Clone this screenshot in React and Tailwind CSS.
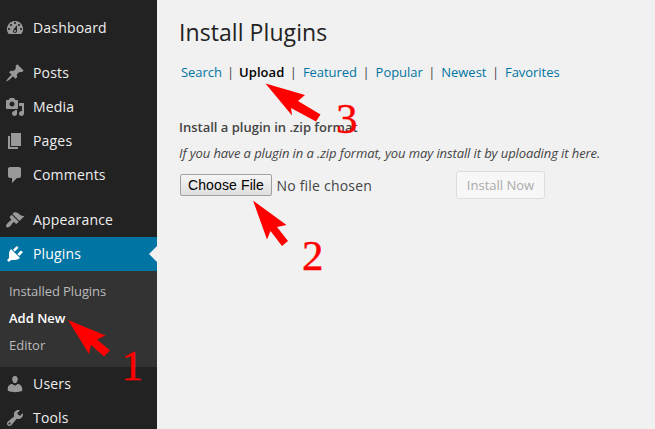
import React from "react";

const ICONS = {
  dashboard:
    "M3.76 16h12.48A7.998 7.998 0 0 0 10 3a7.998 7.998 0 0 0-6.24 13zM10 4c.55 0 1 .45 1 1s-.45 1-1 1-1-.45-1-1 .45-1 1-1zM6 6c.55 0 1 .45 1 1s-.45 1-1 1-1-.45-1-1 .45-1 1-1zm8 0c.55 0 1 .45 1 1s-.45 1-1 1-1-.45-1-1 .45-1 1-1zm-5.37 5.55L12 7v6c0 1.1-.9 2-2 2s-2-.9-2-2c0-.57.24-1.08.63-1.45zM4 10c.55 0 1 .45 1 1s-.45 1-1 1-1-.45-1-1 .45-1 1-1zm12 0c.55 0 1 .45 1 1s-.45 1-1 1-1-.45-1-1 .45-1 1-1zm-5 3c0-.55-.45-1-1-1s-1 .45-1 1 .45 1 1 1 1-.45 1-1z",
  posts:
    "M10.44 3.02l1.82-1.82 6.36 6.35-1.83 1.82c-1.05-.68-2.48-.57-3.41.36l-.75.75c-.92.93-1.04 2.35-.35 3.41l-1.83 1.82-2.41-2.41-2.8 2.79c-.42.42-3.38 2.71-3.8 2.29s1.86-3.39 2.28-3.81l2.79-2.79L4.1 9.36l1.83-1.82c1.05.69 2.48.57 3.4-.36l.75-.75c.93-.92 1.05-2.35.36-3.41z",
  media:
    "M13 11V4c0-.55-.45-1-1-1h-1.67L9 1H5L3.67 3H2c-.55 0-1 .45-1 1v7c0 .55.45 1 1 1h10c.55 0 1-.45 1-1zM7 4.5c1.38 0 2.5 1.12 2.5 2.5S8.38 9.5 7 9.5 4.5 8.38 4.5 7 5.62 4.5 7 4.5zM14 6h5v10.5c0 1.38-1.12 2.5-2.5 2.5S14 17.88 14 16.5s1.12-2.5 2.5-2.5c.17 0 .34.02.5.05V9h-3V6zm-4 8.05V13h2v3.5c0 1.38-1.12 2.5-2.5 2.5S7 17.88 7 16.5 8.12 14 9.5 14c.17 0 .34.02.5.05z",
  pages: "M6 15V2h10v13H6zm-1 1h8v2H3V5h2v11z",
  comments:
    "M5 2h9c1.1 0 2 .9 2 2v7c0 1.1-.9 2-2 2h-2l-5 5v-5H5c-1.1 0-2-.9-2-2V4c0-1.1.9-2 2-2z",
  appearance:
    "M14.48 11.06L7.41 3.99l1.5-1.5c.5-.56 2.3-.47 3.51.32 1.21.8 1.43 1.28 2.91 2.1 1.18.64 2.45 1.26 4.45.85zm-.71.71L6.7 4.7 4.93 6.47c-.39.39-.39 1.02 0 1.41l1.06 1.06c.39.39.39 1.03 0 1.42-.6.6-1.43 1.11-2.21 1.69-.35.26-.7.53-1.01.84C1.43 14.23.4 16.08 1.4 17.07c.99 1 2.84-.03 4.18-1.36.31-.31.58-.66.85-1.02.57-.78 1.08-1.61 1.69-2.21.39-.39 1.02-.39 1.41 0l1.06 1.06c.39.39 1.02.39 1.41 0z",
  plugins:
    "M13.11 4.36L9.87 7.6 8 5.73l3.24-3.24c.35-.34 1.05-.2 1.56.32.52.51.66 1.21.31 1.55zm-8 1.77l.91-1.12 9.01 9.01-1.19.84c-.71.71-2.63 1.16-3.82 1.16H6.14L4.9 17.26c-.59.59-1.54.59-2.12 0-.59-.58-.59-1.53 0-2.12l1.24-1.24v-3.88c0-1.13.4-3.19 1.09-3.89zm7.26 3.97l3.24-3.24c.34-.35 1.04-.21 1.55.31.52.51.66 1.21.31 1.55l-3.24 3.25z",
  users:
    "M10 9.25c-2.27 0-2.73-3.44-2.73-3.44C7 4.02 7.82 2 9.97 2c2.16 0 2.98 2.02 2.71 3.81 0 0-.41 3.44-2.68 3.44zm0 2.57L12.72 10c2.39 0 4.52 2.33 4.52 4.53v2.49s-3.65 1.13-7.24 1.13c-3.65 0-7.24-1.13-7.24-1.13v-2.49c0-2.25 1.94-4.48 4.47-4.48z",
  tools:
    "M16.68 9.77c-1.34 1.34-3.3 1.67-4.95.99l-5.41 6.52c-.99.99-2.59.99-3.58 0s-.99-2.59 0-3.57l6.52-5.42c-.68-1.65-.35-3.61.99-4.95 1.28-1.28 3.12-1.62 4.72-1.06l-2.89 2.89 2.82 2.82 2.86-2.87c.53 1.58.18 3.39-1.08 4.65zM3.81 16.21c.4.39 1.04.39 1.43 0 .4-.4.4-1.04 0-1.43-.39-.4-1.03-.4-1.43 0-.39.39-.39 1.03 0 1.43z",
};

function MenuItem({ icon, label, active }) {
  return (
    <li
      className={
        active
          ? "relative flex h-[34px] shrink-0 items-center gap-2 bg-[#0074a2] pl-[5px] text-white"
          : "flex h-[34px] shrink-0 items-center gap-2 pl-[5px] text-[#eee]"
      }
    >
      <svg
        viewBox="0 0 20 20"
        className={active ? "size-5 fill-white" : "size-5 fill-[#999]"}
      >
        <path d={ICONS[icon]} />
      </svg>
      <span className="text-sm leading-[18px] tracking-[0.18px]">{label}</span>
      {active && (
        <span className="absolute top-[9px] right-0 border-8 border-l-0 border-transparent border-r-[#f1f1f1]" />
      )}
    </li>
  );
}

function Sidebar() {
  return (
    <ul className="flex w-[157px] shrink-0 flex-col bg-[#222] pt-[11px]">
      <MenuItem icon="dashboard" label="Dashboard" />
      <li className="h-[11px] shrink-0" />
      <MenuItem icon="posts" label="Posts" />
      <MenuItem icon="media" label="Media" />
      <MenuItem icon="pages" label="Pages" />
      <MenuItem icon="comments" label="Comments" />
      <li className="h-[11px] shrink-0" />
      <MenuItem icon="appearance" label="Appearance" />
      <MenuItem icon="plugins" label="Plugins" active />
      <li className="h-24 shrink-0 bg-[#333] pt-[7px] pl-[9px] text-[13px] leading-[27px] text-[#bbb]">
        <div className="tracking-[-0.08px]">Installed Plugins</div>
        <div className="font-semibold text-white">Add New</div>
        <div>Editor</div>
      </li>
      <MenuItem icon="users" label="Users" />
      <MenuItem icon="tools" label="Tools" />
    </ul>
  );
}

const TABS = ["Search", "Upload", "Featured", "Popular", "Newest", "Favorites"];

function Main() {
  return (
    <main className="flex flex-1 flex-col items-start pt-[18px] pl-[22px] text-[13px] whitespace-nowrap text-[#444]">
      <h1 className="text-[23px] leading-[29px] tracking-[0.07px] text-[#222]">
        Install Plugins
      </h1>
      <nav className="mt-[15px] flex pl-0.5 leading-5 tracking-[-0.04px]">
        {TABS.map((tab, i) => (
          <span key={tab} className="flex">
            <span
              className={
                tab === "Upload"
                  ? "font-semibold tracking-[0.05px] text-black"
                  : "text-[#0074a2]"
              }
            >
              {tab}
            </span>
            {i < TABS.length - 1 && (
              <span className={i === 0 ? "mr-[5px] ml-[5px]" : "mr-[6px] ml-[5.5px]"}>|</span>
            )}
          </span>
        ))}
      </nav>
      <h4 className="mt-[35px] font-semibold leading-5">Install a plugin in .zip format</h4>
      <p className="mt-1.5 italic leading-5 tracking-[-0.1px]">
        If you have a plugin in a .zip format, you may install it by uploading it here.
      </p>
      <div className="mt-2 flex items-start">
        <button className="mt-[3px] ml-px h-[22px] w-[92px] rounded-[2px] border border-[#a0a0a0] bg-linear-to-b from-[#f6f6f6] to-[#dedede] font-['Liberation_Sans',Arial,sans-serif] text-[14px] leading-[20px] tracking-[0.12px] text-black">
          Choose File
        </button>
        <span className="mt-[5px] ml-[4.5px] w-[179.5px] text-sm leading-5 tracking-[0.2px]">
          No file chosen
        </span>
        <button className="h-7 w-[89px] rounded-[3px] border border-[#ddd] bg-[#f7f7f7] leading-[26px] text-[#aaa]">
          Install Now
        </button>
      </div>
    </main>
  );
}

// Numbered red arrows laid over the page to mark the steps.
function Annotations() {
  return (
    <svg
      viewBox="0 0 655 429"
      className="pointer-events-none absolute inset-0 h-full w-full fill-[#f00] font-['Liberation_Serif',serif] text-[43px]"
    >
      <polygon points="68,320 105.5,335.5 97,339.5 110,350.5 104,356.5 91,345 89,354" />
      <polygon points="253,200.5 286.5,225 277,227 288,241 282,246 270.5,231 267,239.5" />
      <polygon points="265.5,83.5 305,95 298,101 320.5,114.5 316,121.5 291,108 292,115.5" />
      <g className="stroke-[#f00] stroke-[0.4]">
        <text x="121.5" y="380">1</text>
        <text x="302" y="270">2</text>
        <text x="336" y="133">3</text>
      </g>
    </svg>
  );
}

export default function App() {
  return (
    <div className="relative flex h-[429px] w-[655px] overflow-hidden bg-[#f1f1f1] font-['Open_Sans',sans-serif]">
      <Sidebar />
      <Main />
      <Annotations />
    </div>
  );
}
